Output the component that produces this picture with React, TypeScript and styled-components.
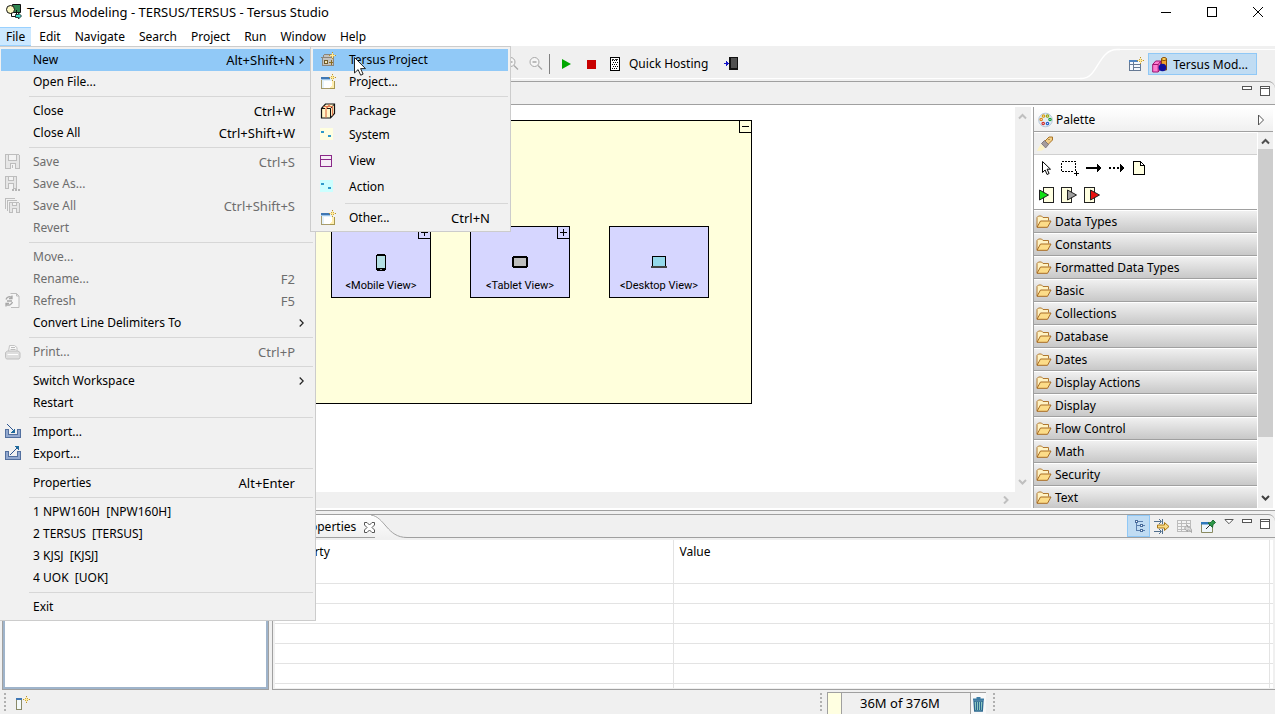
import React from "react";
import styled, { createGlobalStyle, css } from "styled-components";

const GlobalStyle = createGlobalStyle`
  *, *::before, *::after { box-sizing: border-box; }
  body {
    margin: 0;
    background: #f0f0f0;
    color: #000;
    font: 12px/16px "Noto Sans", "Noto Sans CJK SC", sans-serif;
    overflow: hidden;
  }
  button {
    margin: 0;
    padding: 0;
    border: 0;
    background: none;
    color: inherit;
    font: inherit;
    text-align: left;
  }
  svg { display: block; flex: none; }
`;

const line = "#a0a0a0";

/* ---------- window frame ---------- */

const Shell = styled.div`
  height: 100vh;
  display: flex;
  flex-direction: column;
`;

const TitleBar = styled.header`
  height: 27px;
  flex: none;
  display: flex;
  align-items: center;
  gap: 5px;
  padding: 0 1px 4px 6px;
  background: #fff;
`;

const Title = styled.h1`
  flex: 1;
  margin: 0;
  font-size: 13px;
  font-weight: 400;
`;

const WindowButtons = styled.div`
  display: flex;
  gap: 14px;
`;

const WindowButton = styled.button`
  width: 32px;
  height: 22px;
  display: grid;
  place-items: center;
`;

const MenuBar = styled.nav`
  position: relative;
  height: 19px;
  flex: none;
  display: flex;
  gap: 2px;
  background: #fff;
`;

const MenuBarItem = styled.button<{ $open?: boolean }>`
  padding: 0 6px;
  border: 1px solid transparent;
  border-width: 1px 0;
  ${(p) =>
    p.$open &&
    css`
      background: #cce8ff;
      border-color: #99d1ff;
    `}
`;

/* ---------- menus ---------- */

const Menu = styled.div`
  position: absolute;
  z-index: 5;
  top: 100%;
  left: 0;
  width: 316px;
  padding: 2px 2px 2px 1px;
  background: #f1f1f1;
  border: 1px solid #ccc;
  border-left: 0;
`;

const SubMenu = styled.div`
  position: absolute;
  z-index: 6;
  top: -1px;
  left: 310px;
  width: 201px;
  padding: 2px;
  background: #f1f1f1;
  border: 1px solid #ccc;
`;

const MenuRow = styled.button<{ $active?: boolean; $tall?: boolean; $sub?: boolean }>`
  width: 100%;
  height: ${(p) => (p.$tall ? 26 : 22)}px;
  display: flex;
  align-items: center;
  padding-left: ${(p) => (p.$sub ? 7 : 4)}px;
  background: ${(p) => (p.$active ? "#91c9f7" : "transparent")};
  &:disabled { color: #6d6d6d; }
`;

const MenuIcon = styled.span<{ $sub?: boolean }>`
  width: ${(p) => (p.$sub ? 29 : 28)}px;
  flex: none;
`;

const MenuLabel = styled.span`
  flex: 1;
  white-space: pre;
`;

const MenuKeys = styled.span`
  font-size: 13px;
  white-space: nowrap;
`;

const MenuArrow = styled.span`
  width: 18px;
  flex: none;
  padding-left: 4px;
`;

const MenuRule = styled.hr<{ $sub?: boolean }>`
  height: 1px;
  margin: 3px 0 3px ${(p) => (p.$sub ? 32 : 28)}px;
  border: 0;
  background: #d7d7d7;
`;

const Pointer = styled.span`
  position: absolute;
  z-index: 7;
  top: 10px;
  left: 354px;
`;

/* ---------- toolbar ---------- */

const ToolBar = styled.div`
  height: 35px;
  flex: none;
  display: flex;
`;

const ToolGroup = styled.div`
  flex: 1;
  display: flex;
  align-items: center;
  padding-left: 504px;
  height: 33px;
  border-bottom: 1px solid #fff;
`;

const ToolButton = styled.button<{ $gap?: number }>`
  display: flex;
  align-items: center;
  gap: 7px;
  margin-right: ${(p) => p.$gap ?? 8}px;
  padding-top: 4px;
`;

const ToolDivider = styled.span`
  width: 1px;
  height: 20px;
  margin: 4px 8px 0 0;
  background: #808080;
`;

const Perspectives = styled.div`
  display: flex;
  align-items: flex-start;
  gap: 3px;
  margin-top: 3px;
  padding: 3px 18px 0 4px;
  border-top: 1px solid #fff;
`;

const PerspectiveButton = styled.button<{ $active?: boolean }>`
  display: flex;
  align-items: center;
  gap: 5px;
  height: 22px;
  padding: 2px 3px 0;
  border: 1px solid ${(p) => (p.$active ? "#90c8f6" : "transparent")};
  background: ${(p) => (p.$active ? "#c0dcf3" : "transparent")};
  padding-right: ${(p) => (p.$active ? 8 : 0)}px;
`;

/* ---------- workbench ---------- */

const Workbench = styled.main`
  flex: 1;
  min-height: 0;
  display: flex;
  gap: 3px;
  padding-left: 2px;
`;

const Explorer = styled.section`
  width: 267px;
  flex: none;
  padding: 2px;
  border: 1px solid ${line};
  background: #9fb4cb;
`;

const ExplorerBody = styled.div`
  height: 100%;
  background: #fff;
`;

const Column = styled.div`
  flex: 1;
  min-width: 0;
  display: flex;
  flex-direction: column;
  gap: 3px;
`;

const Panel = styled.section<{ $fill?: boolean }>`
  flex: ${(p) => (p.$fill ? "1" : "none")};
  height: ${(p) => (p.$fill ? "auto" : "176px")};
  min-height: 0;
  display: flex;
  flex-direction: column;
  border: 1px solid ${line};
  border-right: 0;
  border-radius: 0 7px 0 0;
  overflow: hidden;
`;

const PanelBar = styled.div`
  height: 23px;
  flex: none;
  display: flex;
  border-bottom: 1px solid ${line};
`;

const PanelTools = styled.div`
  margin-left: auto;
  display: flex;
  align-items: flex-start;
  padding-right: 4px;
`;

const PanelTool = styled.button<{ $on?: boolean }>`
  width: 23px;
  height: 22px;
  display: grid;
  place-items: center;
  border: 1px solid ${(p) => (p.$on ? "#90c8f6" : "transparent")};
  background: ${(p) => (p.$on ? "#c0dcf3" : "transparent")};
`;

const CornerTool = styled.button<{ $first?: boolean }>`
  width: ${(p) => (p.$first ? 16 : 18)}px;
  padding: 4px 0 0 ${(p) => (p.$first ? 5 : 7)}px;
`;

const EditorBody = styled.div`
  flex: 1;
  min-height: 0;
  display: flex;
  gap: 2px;
  padding: 2px;
  background: #fff;
`;

const CanvasArea = styled.div`
  flex: 1;
  min-width: 0;
  display: grid;
  grid-template: 1fr 16px / 1fr 16px;
`;

const Canvas = styled.div`
  padding: 13px;
  overflow: hidden;
`;

const VScroll = styled.div`
  display: flex;
  flex-direction: column;
  justify-content: space-between;
  align-items: center;
  padding: 6px 1px 6px 0;
  background: #f0f0f0;
`;

const HScroll = styled.div`
  grid-column: 1 / 3;
  display: flex;
  justify-content: flex-end;
  align-items: center;
  padding-right: 21px;
  background: #f0f0f0;
`;

const RootNode = styled.div`
  position: relative;
  width: 464px;
  height: 284px;
  display: flex;
  align-items: flex-start;
  gap: 39px;
  padding: 105px 42px;
  border: 1px solid #000;
  background: #ffffdc;
`;

const ViewNode = styled.div`
  position: relative;
  width: 100px;
  height: 72px;
  flex: none;
  display: grid;
  grid-template-rows: 50px 17px;
  justify-items: center;
  align-items: end;
  border: 1px solid #000;
  background: #d6d6ff;
  font: 11px/16px Roboto, sans-serif;
`;

const NodeIcon = styled.span`
  height: 30px;
  display: grid;
  place-items: center;
`;

const NodeToggle = styled.button`
  position: absolute;
  top: -1px;
  right: -1px;
  width: 13px;
  height: 13px;
  display: grid;
  place-items: center;
  border: 1px solid #000;
`;

/* ---------- palette ---------- */

const Palette = styled.aside`
  width: 240px;
  flex: none;
  display: flex;
  flex-direction: column;
  border-left: 1px solid ${line};
`;

const PaletteHead = styled.div`
  height: 25px;
  flex: none;
  display: flex;
  align-items: center;
  gap: 2px;
  padding: 1px 8px 0 4px;
  border-bottom: 1px solid ${line};
  background: linear-gradient(#fff, #f0f0f0);
`;

const PaletteTitle = styled.h2`
  flex: 1;
  margin: 0;
  font-size: 12px;
  font-weight: 400;
`;

const PaletteMain = styled.div`
  flex: 1;
  min-height: 0;
  display: flex;
  gap: 1px;
`;

const PaletteList = styled.div`
  flex: 1;
  overflow: hidden;
`;

const PinRow = styled.div`
  height: 23px;
  padding: 3px;
  border-top: 1px solid #fff;
  border-bottom: 1px solid #d0d0d0;
  background: #efefef;
`;

const ToolRows = styled.div`
  height: 54px;
  display: flex;
  flex-direction: column;
  gap: 11px;
  padding: 5px 4px;
  background: #fff;
`;

const ToolRow = styled.div`
  display: flex;
  gap: 7px;
`;

const Drawer = styled.button`
  width: 100%;
  height: 23px;
  display: flex;
  align-items: center;
  gap: 3px;
  padding: 1px 2px 0;
  border-top: 1px solid ${line};
  background: linear-gradient(#f2f2f2, #c8c8c8);
  box-shadow: inset 0 1px #fff;
`;

const PaletteScroll = styled.div`
  width: 15px;
  display: flex;
  flex-direction: column;
  align-items: center;
  gap: 3px;
  padding: 6px 0;
  background: #f0f0f0;
`;

const Thumb = styled.span`
  flex: none;
  width: 100%;
  height: 79%;
  margin-bottom: auto;
  background: #cdcdcd;
`;

/* ---------- properties view ---------- */

const Tab = styled.div`
  display: flex;
  align-items: center;
  gap: 8px;
  padding: 2px 0 0 25px;
  background: linear-gradient(#fff, #f0f0f0);
`;

const TabEdge = styled.svg`
  margin-left: -8px;
`;

const TableFrame = styled.div`
  flex: 1;
  min-height: 0;
  padding: 2px 2px 1px;
  overflow: hidden;
`;

const Table = styled.table`
  width: 100%;
  height: 100%;
  border-collapse: collapse;
  table-layout: fixed;
  background: #fff;
  th {
    height: 43px;
    padding: 4px 6px;
    border: solid #e3e3e3;
    border-width: 0 1px 1px 0;
    font-weight: 400;
    text-align: left;
    vertical-align: top;
  }
  td {
    height: 20px;
    padding: 0;
    border: solid #e3e3e3;
    border-width: 0 1px 1px 0;
  }
  tr > :last-child { border-right: 0; }
  tbody tr:last-child td { height: auto; border-bottom: 0; }
`;

const ColProperty = styled.col` width: 398px; `;
const ColEnd = styled.col` width: 4px; `;

/* ---------- status bar ---------- */

const StatusBar = styled.footer`
  height: 24px;
  flex: none;
  display: flex;
  align-items: flex-start;
  padding: 0 280px 0 4px;
`;

const Grip = styled.span`
  width: 2px;
  height: 20px;
  margin-top: 3px;
  background: repeating-linear-gradient(#b0b0b0 0 2px, transparent 2px 4px);
`;

const StatusButton = styled.button`
  margin: 5px auto 0 9px;
`;

const Heap = styled.div`
  height: 22px;
  display: flex;
  margin: 2px 7px 0 5px;
  border: solid ${line};
  border-width: 1px 0 0 1px;
`;

const HeapUsed = styled.span`
  width: 14px;
  background: #ffffe1;
  border-right: 1px solid ${line};
`;

const HeapText = styled.span`
  width: 129px;
  padding: 2px 0 0 18px;
  border-right: 1px solid ${line};
  font-size: 13px;
`;

const TrashButton = styled.button`
  width: 15px;
  background: #f8f8f8;
`;

/* ---------- icons ---------- */

type Kids = { children?: React.ReactNode; w?: number; h?: number; soft?: boolean };

const Icon = ({ children, w = 16, h = 16, soft }: Kids) => (
  <svg
    width={w}
    height={h}
    viewBox={`0 0 ${w} ${h}`}
    fill="none"
    shapeRendering={soft ? "auto" : "crispEdges"}
    aria-hidden="true"
  >
    {children}
  </svg>
);

const Sparkle = ({ x, y }: { x: number; y: number }) => (
  <g transform={`translate(${x} ${y})`}>
    <path d="M3 0h1v2h1v1h2v1h-2v1h-1v2h-1v-2h-1v-1h-2v-1h2v-1h1z" fill="#b8902c" />
    <path d="M2 2h1v1h-1zM4 2h1v1h-1zM2 4h1v1h-1zM4 4h1v1h-1z" fill="#c8a848" />
    <path d="M3 1h1v5h-1zM1 3h5v1h-5z" fill="#ffe99a" />
  </g>
);

const AppIcon = () => (
  <Icon soft>
    <path d="M6.5.5h8v8h-8z" fill="#2f8550" stroke="#111" />
    <circle cx="4.5" cy="5.5" r="4" fill="#fbf7c0" stroke="#111" />
    <path d="M5.500 9v3.500H10M10.500 6v5" stroke="#111" />
    <path d="M9.500 10.500h3v-1.500l3 3-3 3v-1.500h-3z" fill="#40d8c8" stroke="#111" strokeWidth=".8" />
  </Icon>
);

const FloppyPath = () => (
  <>
    <path d="M.5.5h13l1 1v13h-14z" fill="#e6e6e6" stroke="#bdbdbd" />
    <path d="M3.500.500v6h8v-6M5.500 14.500v-5h5v5" fill="#f3f3f3" stroke="#bdbdbd" />
    <path d="M7 11h1v3h-1z" fill="#bdbdbd" />
  </>
);

const SaveIcon = () => (
  <Icon>
    <FloppyPath />
  </Icon>
);

const SaveAsIcon = () => (
  <Icon>
    <path d="M.500.500h11v12h-11z" fill="#e6e6e6" stroke="#bdbdbd" />
    <path d="M3.500.500v4h5v-4M3.500 12.500v-5h5v5" fill="#f3f3f3" stroke="#bdbdbd" />
    <path d="M7 13h2v2h-2zM10 13h2v2h-2zM13 13h2v2h-2z" fill="#b5b5b5" />
  </Icon>
);

const SaveAllIcon = () => (
  <Icon>
    <path d="M.500 10.500v-10h9M2.500 12.500v-10h9" stroke="#bdbdbd" />
    <path d="M4.500 4.500h9l1 1v9h-10z" fill="#e6e6e6" stroke="#bdbdbd" />
    <path d="M7.500 4.500v3h4v-3M7.500 14.500v-4h4v4" fill="#f3f3f3" stroke="#bdbdbd" />
  </Icon>
);

const RefreshIcon = () => (
  <Icon soft>
    <path d="M5.500.500h6l2.500 2.500v11.500h-8" fill="#f6f6f6" stroke="#bcbcbc" />
    <path d="M11.500.500v2.500h2.500" stroke="#bcbcbc" />
    <path d="M1 6.500c1-3 4-3.500 5.500-2M7 2.500v3h-3M7.500 9c-1 3-4 4-6 2.500M1 13.500v-3h3M2 8h5" stroke="#a8a8a8" strokeWidth="1.300" />
  </Icon>
);

const PrintIcon = () => (
  <Icon soft>
    <path d="M3.500 7.500l1-6h5l2.500 2v4" fill="#f8f8f8" stroke="#c4c4c4" />
    <path d="M6 3.500h4M5.500 5.500h5" stroke="#bcbcbc" />
    <path d="M.5 8.500l2-1.500h10.500l2 1.500v5l-1 1.500h-12.500l-1-1.500z" fill="#dedede" stroke="#c0c0c0" />
    <path d="M2.500 10.500h10.500" stroke="#fff" />
  </Icon>
);

const TrayPath = () => (
  <path d="M.5 5.500h3v5h9v-5h3v8h-15z" fill="#93a9cf" stroke="#53709f" />
);

const ImportIcon = () => (
  <Icon>
    <TrayPath />
    <path d="M2 0l7 7" stroke="#2e5590" />
    <path d="M10 4v5h-5z" fill="#1f6a9c" />
  </Icon>
);

const ExportIcon = () => (
  <Icon>
    <TrayPath />
    <path d="M5 9l7-7" stroke="#2e5590" />
    <path d="M9 0h5v5z" fill="#1f6a9c" />
  </Icon>
);

const NewProjectIcon = () => (
  <Icon>
    <path d="M2.500 5.500l2-3h7l2 3v8h-11zM1 5.500h13" fill="#c4c2be" stroke="#8a857c" />
    <path d="M4.500 8.500h3v3h-3z" fill="#f3e8bc" stroke="#6e5a2a" />
    <path d="M9 10.500h4M11.500 8v5" stroke="#8a6d22" />
    <Sparkle x={9} y={0} />
  </Icon>
);

const WizardIcon = () => (
  <Icon>
    <path d="M1.500 3.500h11v11h-11z" fill="#e3f1fb" stroke="#a89c6c" />
    <path d="M4 7h8v7h-8z" fill="#fff" />
    <path d="M1 3h9v2h-9z" fill="#3f77b4" />
    <path d="M1 5h9v1h-9z" fill="#9cc4e8" />
    <path d="M14.500 7v7.500h-5" stroke="#a89850" />
    <path d="M12 7h2v7h-4v-1h1v-1h1z" fill="#ffeeb0" />
    <Sparkle x={9} y={0} />
  </Icon>
);

const PackageIcon = () => (
  <Icon soft>
    <path d="M1.500 5.500l4-4.500h9v9.500l-4 4.500h-9z" fill="#fff6c8" stroke="#111" strokeWidth="1.200" />
    <path d="M10.500 15v-9.500l4-4.500M1.500 5.500h3.500M7 5.500h3.500" stroke="#111" />
    <path d="M6 14.500v-9l4-4M3.500 3.500h9v9" stroke="#e0764e" strokeWidth="1.200" />
  </Icon>
);

const FlowIcon = ({ bg }: { bg: string }) => (
  <Icon>
    <path d="M0 1h13v12h-13z" fill={bg} />
    <path d="M1 4h3v2h-3zM8 8h3v2h-3z" fill="#2e9acb" />
  </Icon>
);

const ViewIcon = () => (
  <Icon>
    <path d="M.500 2.500h11v11h-11zM.500 6.500h11" fill="#f6ecf6" stroke="#8a2888" />
  </Icon>
);

const ArrowRight = () => (
  <Icon w={5} h={8} soft>
    <path d="M.7.500l3.500 3.500-3.500 3.500" stroke="#222" strokeWidth="1.200" />
  </Icon>
);

const ZoomOutIcon = () => (
  <Icon soft>
    <circle cx="6.500" cy="6" r="4.500" fill="#f6f6f6" stroke="#a8a8a8" />
    <path d="M4.500 6h4M10 9.500l4 4" stroke="#a8a8a8" strokeWidth="1.300" />
  </Icon>
);

const ServerIcon = () => (
  <Icon w={12} h={16}>
    <path d="M.500 1.500h9v13h-9z" fill="#fff" stroke="#000" />
    <path d="M2 4.500h6M3 6.500h5M2 8.500h6M3 10.500h5M2 12.500h6" stroke="#000" strokeDasharray="1 1" />
    <path d="M2 3h2v1h-2zM5 3h3v1h-3z" fill="#333" />
  </Icon>
);

const SendIcon = () => (
  <Icon>
    <path d="M0 7h4v1h-4zM2 5l3 2.500-3 2.500z" fill="#1414c8" />
    <path d="M5.500 1.500h8v12h-8z" fill="#505050" stroke="#111" />
    <path d="M5 1h2v13h-2zM7 12h6v2h-6z" fill="#111" />
  </Icon>
);

const OpenPerspectiveIcon = () => (
  <Icon>
    <path d="M1.500 3.500h11v10h-11zM1.500 7.500h11M5.500 5v8.500M6 10.500h6.500" fill="#f4f9ff" stroke="#667a94" />
    <path d="M1 3h9v2h-9z" fill="#4d83c0" />
    <Sparkle x={9} y={0} />
  </Icon>
);

const ShapesIcon = () => (
  <Icon soft>
    <path d="M9.500 2v11h5v-11z" fill="#f2a22c" stroke="#8a4a00" />
    <ellipse cx="12" cy="2" rx="2.500" ry="1.500" fill="#ffd860" stroke="#8a4a00" />
    <path d="M.7 7.500l3-3.500h5v7.500l-2.500 3.500h-5.500z" fill="#ff7cd0" stroke="#9c1470" />
    <path d="M.7 7.500h5.500v7M6.200 7.500l2.500-3.500" stroke="#9c1470" />
    <circle cx="10.500" cy="10.500" r="3.800" fill="#10109c" />
  </Icon>
);

const MinIcon = () => (
  <Icon w={10} h={4}>
    <path d="M.500.500h9v3h-9z" fill="#fff" stroke="#555" />
  </Icon>
);

const MaxIcon = () => (
  <Icon w={10} h={10}>
    <path d="M.500.500h9v9h-9zM.500 2.500h9" fill="#fff" stroke="#555" />
  </Icon>
);

const Chevron = ({ d, color }: { d: string; color: string }) => (
  <Icon w={9} h={8} soft>
    <path d={d} stroke={color} strokeWidth="2" />
  </Icon>
);
const up = "M1 5.500l3.500-3.500 3.500 3.500";
const down = "M1 2l3.500 3.500 3.500-3.500";
const right = "M3 .500l3.500 3.500-3.500 3.500";

const PaletteIcon = () => (
  <Icon soft>
    <circle cx="7.500" cy="8" r="6.800" fill="#e2ecf6" stroke="#b4c6d8" />
    <g strokeWidth="1.200" fill="#fff">
      <circle cx="5.500" cy="4" r="1.200" stroke="#d8a018" />
      <circle cx="9.500" cy="4" r="1.200" stroke="#98a818" />
      <circle cx="12" cy="7.500" r="1.200" stroke="#18a038" />
      <circle cx="3.200" cy="7.500" r="1.200" stroke="#e08818" />
      <circle cx="5.200" cy="11.500" r="1.200" stroke="#d03030" />
      <circle cx="9.500" cy="11.500" r="1.200" stroke="#2860c8" />
    </g>
  </Icon>
);

const TorchIcon = () => (
  <Icon soft>
    <path d="M8 5l4-4h3.500v3l-5 5z" fill="#f2cf88" stroke="#a87428" />
    <path d="M4.500 7.500l3-3 4 4-3 3.500z" fill="#a49c9c" stroke="#807878" />
    <path d="M4 8l4 4-3 2.500-5 .500 2-4z" fill="#fdf3c4" />
    <path d="M11.500 4l1-1" stroke="#7c5010" />
  </Icon>
);

const SelectIcon = () => (
  <Icon soft>
    <path d="M4.500 1.500v11l2.600-2.500 2 4.500 2-1-2-4.300h3.400z" fill="#fff" stroke="#000" />
  </Icon>
);

const MarqueeIcon = () => (
  <Icon w={18}>
    <path d="M.500 1.500h14v10h-14z" stroke="#000" strokeDasharray="2 1" />
    <path d="M13 11h5v5h-5z" fill="#fff" />
    <path d="M15 11h1v5h-1zM13 13h5v1h-5z" fill="#000" />
  </Icon>
);

const FlowArrow = ({ dashed }: { dashed?: boolean }) => (
  <Icon>
    <path d="M0 8h11" stroke="#000" strokeWidth="2" strokeDasharray={dashed ? "2 2" : undefined} />
    <path d="M11 4l5 4-5 4z" fill="#000" />
  </Icon>
);

const NoteIcon = () => (
  <Icon>
    <path d="M1.500 1.500h7l4 4v9h-11zM8.500 1.500v4h4" fill="#ffffe1" stroke="#000" />
  </Icon>
);

const SlotIcon = ({ color, box, tri }: { color: string; box: number; tri: number }) => (
  <Icon>
    <path d={`M${box} .500h10v15h-10z`} fill="#ffffe1" stroke="#222" />
    <path d={`M${tri} 3l9 5-9 5z`} fill={color} stroke="#222" shapeRendering="auto" />
  </Icon>
);

const FolderIcon = () => (
  <Icon soft>
    <path d="M1 13v-9.500l1.500-1.500h3l1.500 1.500h5.500v3" fill="#fff3c4" stroke="#b07830" />
    <path d="M1 13.300l3.500-6.300h10.500l-3.500 6.300z" fill="#fcdc88" stroke="#a86c24" />
  </Icon>
);

const CloseIcon = () => (
  <Icon w={11} h={11} soft>
    <path
      d="M.500.500h2.500l2.500 2.500 2.500-2.500h2.500v2.500l-2.500 2.500 2.500 2.500v2.500h-2.500l-2.500-2.500-2.500 2.500h-2.500v-2.500l2.500-2.500-2.500-2.500z"
      fill="#fff"
      stroke="#555"
    />
  </Icon>
);

const TreeIcon = () => (
  <Icon>
    <path d="M5.500 3v10M5 7.500h4M5 12.500h4M7 3.500h5M12 7.500h2M12 12.500h2" stroke="#5a7fae" />
    <path d="M4.500 2.500h2v2h-2zM9.500 6.500h2v2h-2zM9.500 11.500h2v2h-2z" fill="#fff" stroke="#4a6d9c" />
  </Icon>
);

const FilterIcon = () => (
  <Icon soft>
    <path d="M0 3.500h7M5 1l2.500 2.500-2.500 2.500M8.500 1v5M0 13.500h7M5 11l2.500 2.500-2.500 2.500M8.500 11v5" stroke="#52708e" />
    <path d="M3.500 7h7v-2.500l4.500 4-4.500 4v-2.500h-7z" fill="#fbdc84" stroke="#a87818" />
  </Icon>
);

const DefaultsIcon = () => (
  <Icon>
    <path d="M.500 2.500h13v11h-13zM.500 5.500h13M.500 8.500h13M.500 11.500h8M4.500 2.500v11M9.500 2.500v6" fill="#f4f4f4" stroke="#bcbcbc" />
    <path d="M7.500 10l3-3v2c3 0 4.500 2 4 5.500-1-2-2-2.500-4-2.500v2z" fill="#ddd" stroke="#a8a8a8" shapeRendering="auto" />
  </Icon>
);

const PinIcon = () => (
  <Icon soft>
    <path d="M1.500 5.500h11v9h-11z" fill="#eef6fc" stroke="#8a8a60" />
    <path d="M1 4h8v2.500h-8z" fill="#2f78bc" />
    <path d="M6 11l4-4" stroke="#333" />
    <path d="M8 5l3-.500 2-2.500 2.500 2.500-2.500 2-.500 3z" fill="#2d9a48" stroke="#1c6a30" />
  </Icon>
);

const ViewMenuIcon = () => (
  <Icon w={10} h={6} soft>
    <path d="M.800.500h8.400l-4.200 4.200z" fill="#fff" stroke="#555" />
  </Icon>
);

const FastViewIcon = () => (
  <Icon>
    <path d="M1.500 3.500h5v11h-5z" fill="#f4fafa" stroke="#8a8a68" />
    <path d="M1 3h6v2h-6z" fill="#3f77b4" />
    <Sparkle x={8} y={1} />
  </Icon>
);

const TrashIcon = () => (
  <Icon w={15} soft>
    <path d="M3 5h9l-.700 10h-7.600z" fill="#8cc8c0" stroke="#2c6890" strokeWidth="1.300" />
    <path d="M5.500 6v8M7.500 6v8M9.500 6v8" stroke="#2c6890" />
    <path d="M2 3.500h11M5.500 2h4" stroke="#3c7ca4" strokeWidth="1.800" />
  </Icon>
);

const PhoneIcon = () => (
  <Icon w={10} h={17}>
    <path d="M1 0h8v1h1v15h-1v1h-8v-1h-1v-15h1z" fill="#000" />
    <path d="M1 2h8v12h-8z" fill="#b4dfe4" />
    <path d="M4 15h2v1h-2z" fill="#999" />
  </Icon>
);

const TabletIcon = () => (
  <Icon w={16} h={12}>
    <path d="M1 0h14v1h1v10h-1v1h-14v-1h-1v-10h1z" fill="#000" />
    <path d="M2 2h12v8h-12z" fill="#bdbdbd" />
  </Icon>
);

const LaptopIcon = () => (
  <Icon w={16} h={12}>
    <path d="M1.500.500h13v10h-13z" fill="#94d8ea" stroke="#000" />
    <path d="M0 10h16v2h-16z" fill="#444" />
  </Icon>
);

/* ---------- data ---------- */

type Entry =
  | "rule"
  | { label: string; keys?: string; icon?: React.ReactNode; off?: boolean; more?: boolean; active?: boolean; tall?: boolean };

const fileMenu: Entry[] = [
  { label: "New", keys: "Alt+Shift+N", more: true, active: true },
  { label: "Open File..." },
  "rule",
  { label: "Close", keys: "Ctrl+W" },
  { label: "Close All", keys: "Ctrl+Shift+W" },
  "rule",
  { label: "Save", keys: "Ctrl+S", icon: <SaveIcon />, off: true },
  { label: "Save As...", icon: <SaveAsIcon />, off: true },
  { label: "Save All", keys: "Ctrl+Shift+S", icon: <SaveAllIcon />, off: true },
  { label: "Revert", off: true },
  "rule",
  { label: "Move...", off: true },
  { label: "Rename...", keys: "F2", off: true },
  { label: "Refresh", keys: "F5", icon: <RefreshIcon />, off: true },
  { label: "Convert Line Delimiters To", more: true },
  "rule",
  { label: "Print...", keys: "Ctrl+P", icon: <PrintIcon />, off: true },
  "rule",
  { label: "Switch Workspace", more: true },
  { label: "Restart" },
  "rule",
  { label: "Import...", icon: <ImportIcon /> },
  { label: "Export...", icon: <ExportIcon /> },
  "rule",
  { label: "Properties", keys: "Alt+Enter" },
  "rule",
  { label: "1 NPW160H  [NPW160H]" },
  { label: "2 TERSUS  [TERSUS]" },
  { label: "3 KJSJ  [KJSJ]" },
  { label: "4 UOK  [UOK]" },
  "rule",
  { label: "Exit" },
];

const newMenu: Entry[] = [
  { label: "Tersus Project", icon: <NewProjectIcon />, active: true },
  { label: "Project...", icon: <WizardIcon /> },
  "rule",
  { label: "Package", icon: <PackageIcon /> },
  { label: "System", icon: <FlowIcon bg="#ffffe0" />, tall: true },
  { label: "View", icon: <ViewIcon />, tall: true },
  { label: "Action", icon: <FlowIcon bg="#ccffff" />, tall: true },
  "rule",
  { label: "Other...", keys: "Ctrl+N", icon: <WizardIcon /> },
];

const drawers = [
  "Data Types", "Constants", "Formatted Data Types", "Basic", "Collections", "Database", "Dates",
  "Display Actions", "Display", "Flow Control", "Math", "Security", "Text",
];

const Entries = ({ items, sub }: { items: Entry[]; sub?: boolean }) => (
  <>
    {items.map((it, i) =>
      it === "rule" ? (
        <MenuRule key={i} $sub={sub} />
      ) : (
        <MenuRow key={i} role="menuitem" disabled={it.off} $active={it.active} $tall={it.tall} $sub={sub}>
          <MenuIcon $sub={sub}>{it.icon}</MenuIcon>
          <MenuLabel>{it.label}</MenuLabel>
          <MenuKeys>{it.keys}</MenuKeys>
          <MenuArrow>{it.more && <ArrowRight />}</MenuArrow>
        </MenuRow>
      )
    )}
  </>
);

const CornerTools = () => (
  <>
    <CornerTool aria-label="Minimize view"><MinIcon /></CornerTool>
    <CornerTool aria-label="Maximize view"><MaxIcon /></CornerTool>
  </>
);

export default function App() {
  return (
    <Shell>
      <GlobalStyle />
      <TitleBar>
        <AppIcon />
        <Title>Tersus Modeling - TERSUS/TERSUS - Tersus Studio</Title>
        <WindowButtons>
          <WindowButton aria-label="Minimize">
            <Icon w={10} h={10}><path d="M0 5.500h10" stroke="#000" /></Icon>
          </WindowButton>
          <WindowButton aria-label="Maximize">
            <Icon w={10} h={10}><path d="M.500.500h9v9h-9z" stroke="#000" /></Icon>
          </WindowButton>
          <WindowButton aria-label="Close">
            <Icon w={10} h={10} soft><path d="M0 0l10 10M10 0l-10 10" stroke="#000" /></Icon>
          </WindowButton>
        </WindowButtons>
      </TitleBar>

      <MenuBar>
        {["File", "Edit", "Navigate", "Search", "Project", "Run", "Window", "Help"].map((m) => (
          <MenuBarItem key={m} $open={m === "File"}>{m}</MenuBarItem>
        ))}
        <Menu role="menu" aria-label="File">
          <Entries items={fileMenu} />
          <SubMenu role="menu" aria-label="New">
            <Entries items={newMenu} sub />
          </SubMenu>
          <Pointer>
            <Icon w={12} h={19} soft>
              <path d="M.500.500v15.500l3.600-3.400 2.600 5.600 2.400-1.100-2.500-5.500h4.900z" fill="#fff" stroke="#222" />
            </Icon>
          </Pointer>
        </Menu>
      </MenuBar>

      <ToolBar>
        <ToolGroup>
          <ToolButton aria-label="Zoom in"><ZoomOutIcon /></ToolButton>
          <ToolButton aria-label="Zoom out" $gap={5}><ZoomOutIcon /></ToolButton>
          <ToolDivider />
          <ToolButton aria-label="Run" $gap={10}>
            <Icon soft><path d="M4 3l9 5-9 5z" fill="#00a800" /></Icon>
          </ToolButton>
          <ToolButton aria-label="Stop" $gap={10}>
            <Icon><path d="M3 4h9v9h-9z" fill="#c80000" /></Icon>
          </ToolButton>
          <ToolButton $gap={16}>
            <ServerIcon />
            Quick Hosting
          </ToolButton>
          <ToolButton aria-label="Send to device"><SendIcon /></ToolButton>
        </ToolGroup>
        <Icon w={40} h={35} soft>
          <path d="M0 32.500h2c16 0 16-29 35-29h3" stroke="#fff" strokeWidth="1.400" />
        </Icon>
        <Perspectives>
          <PerspectiveButton aria-label="Open perspective"><OpenPerspectiveIcon /></PerspectiveButton>
          <PerspectiveButton $active>
            <ShapesIcon />
            Tersus Mod...
          </PerspectiveButton>
        </Perspectives>
      </ToolBar>

      <Workbench>
        <Explorer aria-label="Explorer">
          <ExplorerBody />
        </Explorer>
        <Column>
          <Panel $fill>
            <PanelBar>
              <PanelTools><CornerTools /></PanelTools>
            </PanelBar>
            <EditorBody>
              <CanvasArea>
                <Canvas>
                  <RootNode>
                    <NodeToggle aria-label="Collapse">
                      <Icon w={7} h={7}><path d="M0 3.500h7" stroke="#000" /></Icon>
                    </NodeToggle>
                    {[
                      { name: "<Mobile View>", icon: <PhoneIcon />, plus: true },
                      { name: "<Tablet View>", icon: <TabletIcon />, plus: true },
                      { name: "<Desktop View>", icon: <LaptopIcon />, plus: false },
                    ].map((v) => (
                      <ViewNode key={v.name}>
                        {v.plus && (
                          <NodeToggle aria-label="Expand">
                            <Icon w={7} h={7}><path d="M0 3.500h7M3.500 0v7" stroke="#000" /></Icon>
                          </NodeToggle>
                        )}
                        <NodeIcon>{v.icon}</NodeIcon>
                        <span>{v.name}</span>
                      </ViewNode>
                    ))}
                  </RootNode>
                </Canvas>
                <VScroll>
                  <Chevron d={up} color="#bfbfbf" />
                  <Chevron d={down} color="#bfbfbf" />
                </VScroll>
                <HScroll>
                  <Chevron d={right} color="#bfbfbf" />
                </HScroll>
              </CanvasArea>
              <Palette>
                <PaletteHead>
                  <PaletteIcon />
                  <PaletteTitle>Palette</PaletteTitle>
                  <Icon w={8} h={12} soft><path d="M1.500 1v10l5-5z" fill="#fff" stroke="#555" /></Icon>
                </PaletteHead>
                <PaletteMain>
                  <PaletteList>
                    <PinRow><TorchIcon /></PinRow>
                    <ToolRows>
                      <ToolRow>
                        <button aria-label="Select"><SelectIcon /></button>
                        <button aria-label="Marquee"><MarqueeIcon /></button>
                        <button aria-label="Flow"><FlowArrow /></button>
                        <button aria-label="Removing flow"><FlowArrow dashed /></button>
                        <button aria-label="Note"><NoteIcon /></button>
                      </ToolRow>
                      <ToolRow>
                        <button aria-label="Trigger"><SlotIcon color="#10e010" box={5.5} tri={1.5} /></button>
                        <button aria-label="Exit"><SlotIcon color="#a0a0a0" box={0.5} tri={6.5} /></button>
                        <button aria-label="Error exit"><SlotIcon color="#e81010" box={0.5} tri={6.5} /></button>
                      </ToolRow>
                    </ToolRows>
                    {drawers.map((d) => (
                      <Drawer key={d}>
                        <FolderIcon />
                        {d}
                      </Drawer>
                    ))}
                  </PaletteList>
                  <PaletteScroll>
                    <Chevron d={up} color="#505050" />
                    <Thumb />
                    <Chevron d={down} color="#404040" />
                  </PaletteScroll>
                </PaletteMain>
              </Palette>
            </EditorBody>
          </Panel>

          <Panel>
            <PanelBar>
              <Tab>
                Properties
                <CloseIcon />
              </Tab>
              <TabEdge width="40" height="23" viewBox="0 0 40 23" fill="none" aria-hidden="true">
                <linearGradient id="tabFill" x1="0" y1="0" x2="0" y2="1">
                  <stop offset="0" stopColor="#fff" />
                  <stop offset="1" stopColor="#f0f0f0" />
                </linearGradient>
                <path d="M8 0c10 4 13 21 32 22.500V23H8z" fill="url(#tabFill)" />
                <path d="M4 0c14 2 16 22.500 36 22.500" stroke={line} />
              </TabEdge>
              <PanelTools>
                <PanelTool aria-label="Show categories" $on><TreeIcon /></PanelTool>
                <PanelTool aria-label="Show advanced properties"><FilterIcon /></PanelTool>
                <PanelTool aria-label="Restore default value"><DefaultsIcon /></PanelTool>
                <PanelTool aria-label="Pin view"><PinIcon /></PanelTool>
                <CornerTool aria-label="View menu" $first><ViewMenuIcon /></CornerTool>
                <CornerTools />
              </PanelTools>
            </PanelBar>
            <TableFrame>
              <Table>
                <colgroup>
                  <ColProperty />
                  <col />
                  <ColEnd />
                </colgroup>
                <thead>
                  <tr>
                    <th>Property</th>
                    <th>Value</th>
                    <td />
                  </tr>
                </thead>
                <tbody>
                  {[0, 1, 2, 3, 4, 5].map((r) => (
                    <tr key={r}>
                      <td />
                      <td />
                      <td />
                    </tr>
                  ))}
                </tbody>
              </Table>
            </TableFrame>
          </Panel>
        </Column>
      </Workbench>

      <StatusBar>
        <Grip />
        <StatusButton aria-label="Show view"><FastViewIcon /></StatusButton>
        <Grip />
        <Heap>
          <HeapUsed />
          <HeapText>36M of 376M</HeapText>
          <TrashButton aria-label="Run garbage collector"><TrashIcon /></TrashButton>
        </Heap>
        <Grip />
      </StatusBar>
    </Shell>
  );
}
